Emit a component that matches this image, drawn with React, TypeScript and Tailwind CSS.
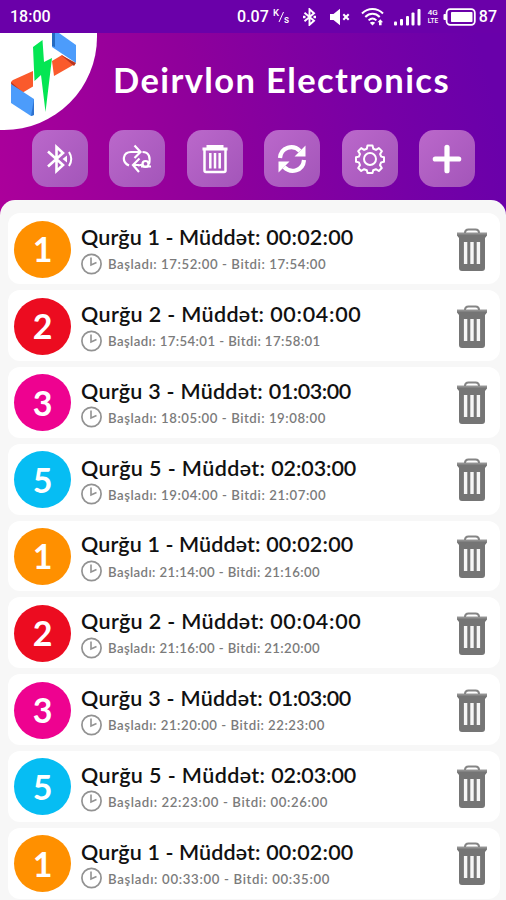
import type { ReactNode } from 'react';

type Entry = {
  device: number;
  duration: string;
  start: string;
  end: string;
  tracking: string;
};

const entries: Entry[] = [
  { device: 1, duration: '00:02:00', start: '17:52:00', end: '17:54:00', tracking: 'tracking-[0.56px]' },
  { device: 2, duration: '00:04:00', start: '17:54:01', end: '17:58:01', tracking: 'tracking-[0.40px]' },
  { device: 3, duration: '01:03:00', start: '18:05:00', end: '19:08:00', tracking: 'tracking-[0.55px]' },
  { device: 5, duration: '02:03:00', start: '19:04:00', end: '21:07:00', tracking: 'tracking-[0.56px]' },
  { device: 1, duration: '00:02:00', start: '21:14:00', end: '21:16:00', tracking: 'tracking-[0.38px]' },
  { device: 2, duration: '00:04:00', start: '21:16:00', end: '21:20:00', tracking: 'tracking-[0.38px]' },
  { device: 3, duration: '01:03:00', start: '21:20:00', end: '22:23:00', tracking: 'tracking-[0.52px]' },
  { device: 5, duration: '02:03:00', start: '22:23:00', end: '00:26:00', tracking: 'tracking-[0.61px]' },
  { device: 1, duration: '00:02:00', start: '00:33:00', end: '00:35:00', tracking: 'tracking-[0.67px]' },
];

const deviceStyles: Record<number, { badge: string; name: string; time: string }> = {
  1: { badge: 'bg-[#ff9000]', name: 'tracking-[0.12px]', time: 'tracking-[0.20px]' },
  2: { badge: 'bg-[#ec0c20]', name: 'tracking-[0.34px]', time: 'tracking-[0.70px]' },
  3: { badge: 'bg-[#ee0290]', name: 'tracking-[0.26px]', time: 'tracking-[-0.45px]' },
  5: { badge: 'bg-[#06bdf3]', name: 'tracking-[0.40px]', time: 'tracking-[-0.10px]' },
};

function StatusBar() {
  return (
    <div className="flex h-[33px] shrink-0 items-center bg-[#6a00a9] pl-[10px] pr-[9px] font-['Roboto',sans-serif] text-[16px] font-medium text-white">
      <span>18:00</span>
      <span className="ml-auto">0.07</span>
      <svg className="ml-[4px] h-[18px] w-[18px]" viewBox="0 0 18 18" fill="#fff">
        <text x="0" y="8" fontSize="9.5">K</text>
        <text x="11" y="15" fontSize="10">s</text>
        <path d="M6 14 10.5 4" stroke="#fff" strokeWidth="1" />
      </svg>
      <svg className="ml-[11px] h-[18px] w-[15px]" viewBox="0 0 15 18" fill="none" stroke="#fff" strokeWidth="1.9">
        <path d="m2.5 4.8 9.5 8-4.5 4V1.2l4.5 4-9.5 8" />
        <path d="M1 9h2.5M11.5 9H14" strokeWidth="2.4" />
      </svg>
      <svg className="ml-[13px] h-[18px] w-[20px]" viewBox="0 0 20 18">
        <path d="M0 6h3.5L10 0.8v16.4L3.5 12H0z" fill="#fff" />
        <path d="m13.3 6.2 5.4 5.6m0-5.6-5.4 5.6" stroke="#fff" strokeWidth="2" />
      </svg>
      <svg className="ml-[11px] h-[19px] w-[23px]" viewBox="0 0 23 19" fill="none" stroke="#fff" strokeWidth="2">
        <path d="M1 6.5C7 0.5 16 0.5 22 6.5M4.3 10C8.5 5.8 14.5 5.8 18.7 10M7.6 13.4c2.4-2.3 5.4-2.3 7.8 0" />
        <path d="m8.8 15.7 2.7 2.8 2.7-2.8q-2.7-1.8-5.4 0Z" fill="#fff" stroke="none" />
        <path d="m16.5 15.2 2.8-3 2.8 3h-1.5v3h-2.6v-3z" fill="#fff" stroke="none" />
      </svg>
      <svg className="ml-[10px] h-[18px] w-[27px]" viewBox="0 0 27 18" fill="#fff">
        <rect x="0" y="13.5" width="3" height="4" rx="1" />
        <rect x="6" y="11" width="3" height="6.5" rx="1" />
        <rect x="12" y="8" width="3" height="9.5" rx="1" />
        <rect x="17.5" y="4.5" width="3" height="13" rx="1" />
        <rect x="23.5" y="1" width="3" height="16.5" rx="1" />
      </svg>
      <div className="ml-[7px] flex w-[12px] flex-col text-[8px] leading-[8px]">
        <span>4G</span>
        <span className="text-[6.5px]">LTE</span>
      </div>
      <svg className="ml-[3px] h-[18px] w-[33px]" viewBox="0 0 33 18">
        <rect x="3.6" y="1.2" width="28.2" height="15.6" rx="3.6" fill="none" stroke="#fff" strokeWidth="1.8" />
        <rect x="0.5" y="6" width="3" height="6" rx="1" fill="#fff" />
        <rect x="8" y="4" width="21.5" height="10" rx="0.8" fill="#fff" />
      </svg>
      <span className="ml-[3px]">87</span>
    </div>
  );
}

function Logo() {
  return (
    <div className="h-[97px] w-[97px] shrink-0 overflow-hidden rounded-br-[93px] bg-white">
      <svg className="h-full w-full" viewBox="0 0 97 97">
        <path d="M52 0h7l17 12v18L52 14z" fill="#4c9cfb" />
        <path d="M52 0h3v14l-3-1z" fill="#246ac0" />
        <path d="M62 22 75 31 54 43l-2-15z" fill="#fa5a2c" />
        <path d="m61 22 15 8-2 3z" fill="#b83420" />
        <path d="M33 38 13 47q-3 2-1.500 4L22 60l11-6.500z" fill="#fa5a2c" />
        <path d="m11 49 11.500 10-11-6.500z" fill="#b83420" />
        <path d="m11 51 23 15v16l-3 1-20-13z" fill="#4c9cfb" />
        <path d="m34 66-3 17 3-1z" fill="#2e72cf" />
        <path d="M42.500 7 33 14l1.500 34 6.500-6 4.500 37L52 25l-8 4z" fill="#04e653" />
      </svg>
    </div>
  );
}

function ActionButton({ label, children }: { label: string; children: ReactNode }) {
  return (
    <button
      aria-label={label}
      className="flex h-[57px] w-[56px] items-center justify-center rounded-[15px] bg-gradient-to-br from-[#bb68cb] to-[#a355b9] text-white"
    >
      <svg className="h-[30px] w-[30px]" viewBox="0 0 30 30" fill="none" stroke="currentColor" strokeWidth="2">
        {children}
      </svg>
    </button>
  );
}

function Toolbar() {
  return (
    <div className="flex justify-between pl-[32px] pr-[31px]">
      <ActionButton label="Bluetooth">
        <path d="M3 7.5 18 21l-6.500 6V3L18 9 3 22.500" strokeWidth="2.6" />
        <path d="M24 8q4.500 7 0 14" strokeWidth="2" />
        <path d="m17.500 15 4.500-3.500v7z" fill="currentColor" stroke="none" />
      </ActionButton>
      <ActionButton label="Repeat">
        <path d="M7 21.500C-1 18 1 8 9 8h8M12.500 1.500 18.500 8 12.500 14" strokeWidth="2.200" />
        <path d="M20.500 8c7 0 8 6 6.500 12M11 21h6M17.500 14.500 11 21l6 7M16 21.500l5.500-1" strokeWidth="2.200" />
        <circle cx="23.500" cy="20" r="3" strokeWidth="2.200" />
        <path d="M19 22.500h10" />
      </ActionButton>
      <ActionButton label="Delete all">
        <path d="M2.500 5h25M8 4V2.500h14V4" strokeWidth="3" />
        <path d="M4.500 6v20.500q0 1.500 1.500 1.500h18q1.500 0 1.500-1.500V6" strokeWidth="2.500" />
        <path d="M10.300 9v15.500M15 9v15.500M19.700 9v15.500" strokeWidth="2.500" />
      </ActionButton>
      <ActionButton label="Refresh">
        <path d="M3 14C4 3 16 0 23 7M27 16C26 27 14 30 7 23" strokeWidth="4.200" />
        <path d="M28.500 1.500v11h-11zM1.500 28.500v-11h11z" fill="currentColor" stroke="none" />
      </ActionButton>
      <ActionButton label="Settings">
        <path
          d="M12.500 1.500h5l.8 3.300 2.700 1.100 2.900-1.800 3 3-1.800 2.900 1.100 2.600 2.800.7v4.400l-2.900.7-1.100 2.700 1.800 2.900-3 3-2.900-1.800-2.700 1.100-.7 2.700h-5l-.7-2.700-2.700-1.100-2.900 1.800-3-3 1.800-2.900-1.100-2.700-2.900-.7v-4.400l2.900-.7 1.100-2.600-1.800-2.900 3-3 2.900 1.800 2.700-1.100z"
          strokeWidth="2"
          strokeLinejoin="round"
        />
        <circle cx="15" cy="15" r="6" />
      </ActionButton>
      <ActionButton label="Add">
        <path d="M15 3.300v23.400M3.300 15h23.400" strokeWidth="5.200" strokeLinecap="round" />
      </ActionButton>
    </div>
  );
}

function ClockIcon() {
  return (
    <svg className="h-[22px] w-[22px] shrink-0" viewBox="0 0 22 22" fill="none" stroke="#929292">
      <circle cx="10.500" cy="11" r="9.600" strokeWidth="1.700" />
      <path d="M10 4.500v7.500l5.500-2.500" strokeWidth="1.600" />
    </svg>
  );
}

function TrashIcon() {
  return (
    <svg className="h-[44px] w-[32px]" viewBox="0 0 32 44">
      <path d="M9 5q0-3.500 3.500-3.500h7Q23 1.500 23 5" fill="none" stroke="#858585" strokeWidth="2" />
      <path d="M1 4.800h30v2.700l-2 2.500v30q0 3-3 3H6q-3 0-3-3V10L1 7.500z" fill="#757575" />
      <path d="M1 4.800h30v1.700H1z" fill="#929292" />
      <path d="M9.600 14v22M16 14v22M22.400 14v22" stroke="#f6f6f6" strokeWidth="3.400" />
    </svg>
  );
}

function EntryCard({ entry }: { entry: Entry }) {
  const style = deviceStyles[entry.device];

  return (
    <li className="flex h-[70.8px] shrink-0 items-center rounded-[12px] bg-white pl-[6px] pr-[12px] pt-px">
      <div
        className={`flex h-[57px] w-[57px] shrink-0 items-center justify-center rounded-full pb-px text-[34px] font-bold text-white ${style.badge}`}
      >
        {entry.device}
      </div>
      <div className="ml-[10px] flex flex-col pt-px whitespace-nowrap">
        <h2 className="text-[21.5px] leading-[28px] font-semibold text-[#111]">
          <span className={style.name}>Qurğu {entry.device} - Müddət: </span>
          <span className={style.time}>{entry.duration}</span>
        </h2>
        <div className="flex h-[25px] items-center gap-[5px] text-[13.2px] font-semibold text-[#7b7b7b]">
          <ClockIcon />
          <span className={`pt-[3px] ${entry.tracking}`}>
            Başladı: {entry.start} - Bitdi: {entry.end}
          </span>
        </div>
      </div>
      <button aria-label="Delete" className="ml-auto pt-px">
        <TrashIcon />
      </button>
    </li>
  );
}

export default function App() {
  return (
    <div className="flex h-[900px] w-[506px] flex-col overflow-hidden bg-[#6a00a9] font-['Lato','Noto_Sans',sans-serif]">
      <StatusBar />
      <main className="flex min-h-0 flex-1 flex-col bg-[linear-gradient(75deg,#ac009b_0px,#8f009b_220px,#7600a6_400px,#6900aa_510px)] bg-[length:506px_190px] bg-no-repeat">
        <header className="flex h-[97px] shrink-0">
          <Logo />
          <h1 className="ml-[16px] pt-[25px] text-[34.5px] leading-[44px] font-bold tracking-[1.4px] whitespace-nowrap text-white">
            Deirvlon Electronics
          </h1>
        </header>
        <Toolbar />
        <ul className="mt-[13px] flex min-h-0 flex-1 flex-col gap-[6px] overflow-hidden rounded-t-[15px] bg-[#f7f7f7] pt-[13.4px] pl-[8px] pr-[6px]">
          {entries.map((entry) => (
            <EntryCard key={entry.start} entry={entry} />
          ))}
        </ul>
      </main>
    </div>
  );
}
